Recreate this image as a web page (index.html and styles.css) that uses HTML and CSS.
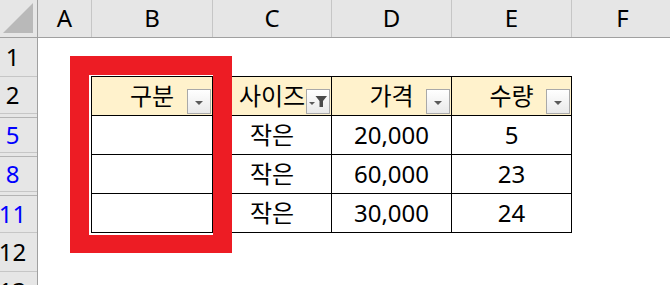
FILE: index.html
```html
<!DOCTYPE html>
<html lang="ko">
<head>
<meta charset="utf-8">
<title>Sheet</title>
<link rel="stylesheet" href="styles.css">
</head>
<body>
<div class="sheet">
  <div class="corner">
    <svg width="37" height="37" viewBox="0 0 37 37"><polygon points="33,3 33,33 3,33" fill="#b9b9b9"/></svg>
  </div>
  <div class="colhead">
    <div class="ch ch-a">A</div>
    <div class="ch ch-b">B</div>
    <div class="ch ch-c">C</div>
    <div class="ch ch-d">D</div>
    <div class="ch ch-e">E</div>
    <div class="ch ch-f">F</div>
  </div>
  <div class="rowhead">
    <div class="rh rh-full">1</div>
    <div class="rh rh-top">2</div>
    <div class="rh-gap"></div>
    <div class="rh rh-mid filtered">5</div>
    <div class="rh-gap"></div>
    <div class="rh rh-mid filtered">8</div>
    <div class="rh-gap"></div>
    <div class="rh rh-top filtered">11</div>
    <div class="rh rh-full">12</div>
    <div class="rh rh-full">13</div>
  </div>
  <div class="cells">
    <div class="tbl">
      <div class="td th">구분<span class="dd"><svg width="10" height="6" viewBox="0 0 10 6"><polygon points="1,1 9,1 5,5" fill="#5a5a5a"/></svg></span></div>
      <div class="td th">사이즈<span class="dd dd-filter"><svg width="20" height="15" viewBox="0 0 20 15"><polygon points="7.5,1 19,1 15,6 15,12 11.5,12 11.5,6" fill="#4a4a4a"/><polygon points="1,7 7,7 4,10" fill="#5a5a5a"/></svg></span></div>
      <div class="td th">가격<span class="dd"><svg width="10" height="6" viewBox="0 0 10 6"><polygon points="1,1 9,1 5,5" fill="#5a5a5a"/></svg></span></div>
      <div class="td th">수량<span class="dd"><svg width="10" height="6" viewBox="0 0 10 6"><polygon points="1,1 9,1 5,5" fill="#5a5a5a"/></svg></span></div>

      <div class="td"></div>
      <div class="td">작은</div>
      <div class="td">20,000</div>
      <div class="td">5</div>

      <div class="td"></div>
      <div class="td">작은</div>
      <div class="td">60,000</div>
      <div class="td">23</div>

      <div class="td"></div>
      <div class="td">작은</div>
      <div class="td">30,000</div>
      <div class="td">24</div>
    </div>
    <div class="mark"></div>
  </div>
</div>
</body>
</html>
```

FILE: styles.css
```css
* { box-sizing: border-box; }
html, body {
  margin: 0;
  padding: 0;
  background: #ffffff;
  overflow: hidden;
}
body {
  width: 670px;
  height: 285px;
  font-family: "Noto Sans", "Noto Sans CJK KR", sans-serif;
  font-size: 24px;
  color: #000;
}
.sheet {
  display: grid;
  grid-template-columns: 38px 632px;
  grid-template-rows: 38px 247px;
  width: 670px;
  height: 285px;
  overflow: hidden;
}
.corner {
  background: #e6e6e6;
  border-right: 1px solid #a0a0a0;
  border-bottom: 1px solid #a0a0a0;
}
.corner svg { display: block; }
.colhead {
  display: flex;
  background: #e6e6e6;
  border-bottom: 1px solid #a0a0a0;
}
.ch {
  display: flex;
  align-items: center;
  justify-content: center;
  border-right: 1px solid #c6c6c6;
  line-height: 1;
  padding-bottom: 1px;
}
.ch-a { width: 54px; }
.ch-b { width: 121px; }
.ch-c { width: 119px; }
.ch-d { width: 120px; }
.ch-e { width: 120px; }
.ch-f { flex: 1; border-right: none; padding-left: 3px; }
.rowhead {
  display: flex;
  flex-direction: column;
  background: #e6e6e6;
  border-right: 1px solid #a0a0a0;
  overflow: hidden;
}
.rh {
  display: flex;
  flex-shrink: 0;
  align-items: center;
  justify-content: center;
  padding-right: 12px;
  border-bottom: 1px solid #c6c6c6;
  line-height: 1;
}
.rh-full { height: 39px; }
.rh-top { height: 37px; }
.rh-mid { height: 35px; }
.rh-gap {
  flex-shrink: 0;
  height: 4px;
  border-bottom: 1px solid #b4b4b4;
}
.filtered { color: #0000ff; }
.cells {
  position: relative;
  padding: 38px 0 0 53px;
  background: #fff;
}
.tbl {
  display: grid;
  grid-template-columns: 121px 119px 120px 120px;
  grid-auto-rows: 39px;
  width: 481px;
  border-left: 1px solid #000;
  border-top: 1px solid #000;
}
.td {
  position: relative;
  display: flex;
  align-items: center;
  justify-content: center;
  border-right: 1px solid #000;
  border-bottom: 1px solid #000;
  line-height: 1;
  padding-bottom: 1px;
  white-space: nowrap;
}
.th {
  background: #fff2cc;
}
.dd {
  position: absolute;
  right: 1px;
  bottom: 1px;
  width: 24px;
  height: 25px;
  border: 1px solid #a9a9a9;
  background: linear-gradient(#ffffff, #e9e9e9);
  display: flex;
  align-items: center;
  justify-content: center;
  padding-top: 2px;
}
.dd svg { display: block; }
.dd-filter { padding-top: 2px; }
.mark {
  position: absolute;
  left: 32px;
  top: 18px;
  width: 162px;
  height: 197px;
  border-style: solid;
  border-color: #ed1c24;
  border-width: 19px 19px 18px 19px;
}
```
